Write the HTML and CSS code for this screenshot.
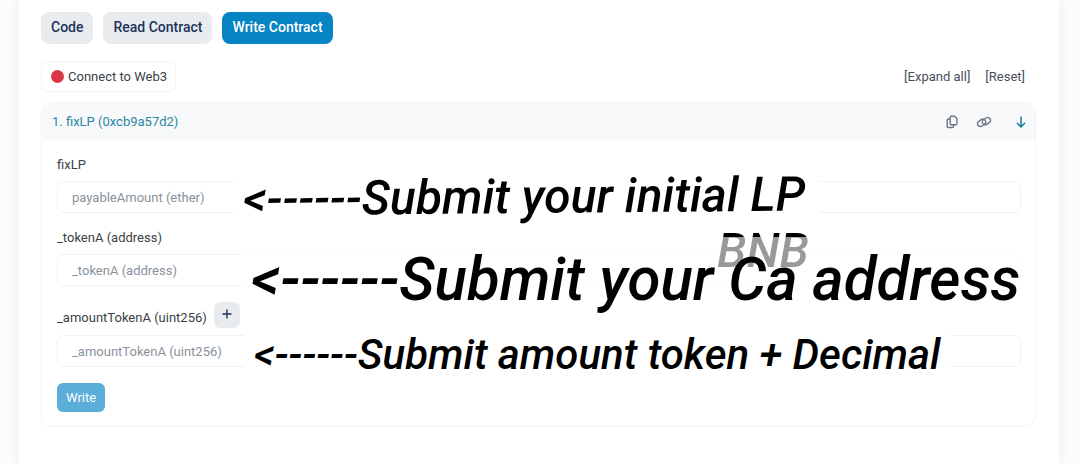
FILE: index.html
```html
<!DOCTYPE html>
<html lang="en">
<head>
<meta charset="utf-8">
<title>Write Contract</title>
<link rel="stylesheet" href="styles.css">
</head>
<body>
<main class="card">
  <nav class="tabs">
    <button class="tab" type="button">Code</button>
    <button class="tab" type="button">Read Contract</button>
    <button class="tab tab-active" type="button">Write Contract</button>
  </nav>
  <div class="toolbar">
    <button class="connect" type="button"><span class="dot"></span>Connect to Web3</button>
    <div class="links"><a href="#expand">[Expand all]</a><a href="#reset">[Reset]</a></div>
  </div>
  <section class="panel">
    <header class="panel-head">
      <a class="panel-title" href="#fixlp">1. fixLP (0xcb9a57d2)</a>
      <div class="actions">
        <button class="icon" type="button" aria-label="Copy"><svg width="12" height="14" viewBox="0 0 12 14" fill="none" stroke="#6b7785" stroke-width="1.4" stroke-linejoin="round"><path d="M5.200 1.200h3.300l2.400 2.300v5.200a1 1 0 0 1-1 1H5.200a1 1 0 0 1-1-1V2.200a1 1 0 0 1 1-1z"/><path d="M4 4H2.200a1 1 0 0 0-1 1v6.500a1 1 0 0 0 1 1h4.300a1 1 0 0 0 1-1V10"/></svg></button>
        <button class="icon" type="button" aria-label="Link"><svg width="16" height="14" viewBox="0 0 16 14" fill="none" stroke="#6b7785" stroke-width="1.400"><rect x="1.300" y="5" width="8.600" height="5.600" rx="2.800" transform="rotate(-35 5.600 7.800)"/><rect x="6.100" y="3.400" width="8.600" height="5.600" rx="2.800" transform="rotate(-35 10.400 6.200)"/></svg></button>
        <button class="icon icon-collapse" type="button" aria-label="Collapse"><svg width="10" height="12" viewBox="0 0 10 12" fill="none" stroke="#1b7f9c" stroke-width="1.500" stroke-linecap="round" stroke-linejoin="round"><path d="M5 1v9.800M1.300 7.200 5 10.900l3.700-3.700"/></svg></button>
      </div>
    </header>
    <form class="form">
      <div class="field">
        <label class="label" for="payable">fixLP</label>
        <div class="control">
          <input class="input" id="payable" type="text" placeholder="payableAmount (ether)">
          <span class="note note-lp">&lt;------Submit your initial LP</span>
          <span class="note note-bnb">BNB</span>
        </div>
      </div>
      <div class="field">
        <label class="label" for="token">_tokenA (address)</label>
        <div class="control control-faded">
          <input class="input" id="token" type="text" placeholder="_tokenA (address)">
          <span class="note note-ca">&lt;------Submit your Ca address</span>
        </div>
      </div>
      <div class="field">
        <div class="label-row">
          <label class="label" for="amount">_amountTokenA (uint256)</label>
          <button class="plus" type="button" aria-label="Add decimals"><svg width="10" height="10" viewBox="0 0 10 10" stroke="#21325b" stroke-width="1.400"><path d="M5 .5v9M.5 5h9"/></svg></button>
        </div>
        <div class="control">
          <input class="input" id="amount" type="text" placeholder="_amountTokenA (uint256)">
          <span class="note note-amount">&lt;------Submit amount token + Decimal</span>
        </div>
      </div>
      <button class="write" type="button">Write</button>
    </form>
  </section>
</main>
</body>
</html>
```
FILE: styles.css
```css
* { box-sizing: border-box; }
body {
  margin: 0;
  background: #fbfcfe;
  font-family: Roboto, "Liberation Sans", sans-serif;
  font-size: 13px;
  line-height: 18px;
  color: #3b3f45;
}
button, input { font: inherit; margin: 0; }
a { color: inherit; text-decoration: none; }
.card {
  margin: 0 21px 0 19px;
  min-height: 100vh;
  padding: 12px 23px 36px 22px;
  background: #fff;
  box-shadow: 0 0 12px rgba(30, 50, 90, 0.07);
}
.tabs { display: flex; gap: 10px; }
.tab {
  height: 32px;
  padding: 0 10px 2px;
  border: 0;
  border-radius: 8px;
  background: #e9ecef;
  color: #21325b;
  font-size: 14px;
  font-weight: 500;
}
.tab-active { background: #0784c3; color: #fff; }
.toolbar {
  display: flex;
  justify-content: space-between;
  align-items: center;
  margin-top: 17px;
  padding-right: 11px;
}
.connect {
  display: flex;
  align-items: center;
  gap: 4px;
  height: 31px;
  padding: 0 8px 0 9px;
  border: 1px solid #f3f4f5;
  border-radius: 6px;
  background: #fff;
  color: #3b3f45;
}
.dot { width: 13px; height: 13px; border-radius: 50%; background: #dc3545; }
.links { display: flex; gap: 15px; color: #46505c; }
.panel {
  margin-top: 10px;
  border: 1px solid #f3f4f5;
  border-radius: 10px;
}
.panel-head {
  display: flex;
  justify-content: space-between;
  align-items: center;
  height: 37px;
  padding: 0 9px 0 10px;
  border-radius: 10px 10px 0 0;
  background: #f7f9fb;
}
.panel-title { color: #2b87a3; }
.actions { display: flex; align-items: center; gap: 18px; }
.icon { display: flex; padding: 0; border: 0; background: none; }
.icon-collapse { margin-left: 6px; }
.form { padding: 16px 14px 14px 15px; }
.field { margin-bottom: 16px; }
.label { display: block; }
.label-row { display: flex; align-items: center; gap: 7px; }
.label-row .label { padding-top: 5px; }
.plus {
  display: flex;
  align-items: center;
  justify-content: center;
  width: 26px;
  height: 26px;
  padding: 0 0 2px;
  border: 0;
  border-radius: 6px;
  background: #e9ecef;
}
.control { position: relative; margin-top: 7px; }
.control-faded::after {
  content: "";
  position: absolute;
  inset: 0 0 0 182px;
  background: rgba(255, 255, 255, 0.7);
  pointer-events: none;
}
.input {
  display: block;
  width: 100%;
  height: 32px;
  padding: 0 14px;
  border: 1px solid #f0f1f3;
  border-radius: 7px;
  background: #fff;
  color: #3b3f45;
}
.input::placeholder { color: #89929b; opacity: 1; }
.note {
  position: absolute;
  color: #000;
  font-style: italic;
  font-weight: 500;
  line-height: 1;
  white-space: nowrap;
  pointer-events: none;
}
.note-lp {
  left: 176px;
  top: -8px;
  padding: 0 15px 0 10px;
  background: #fff;
  font-size: 48px;
  transform: rotate(-0.5deg);
}
.note-bnb {
  z-index: 1;
  left: 660px;
  top: 46px;
  font-size: 48px;
  color: transparent;
  background: linear-gradient(#000 10px, #999 10px);
  background-clip: text;
  -webkit-background-clip: text;
}
.note-ca { z-index: 2; left: 194px; top: -4px; font-size: 60px; }
.note-amount {
  left: 187px;
  top: -1px;
  padding: 0 10px;
  background: #fff;
  font-size: 42px;
}
.write {
  height: 29px;
  padding: 0 9px;
  border: 0;
  border-radius: 6px;
  background: #5aaed8;
  color: #fff;
}
```
